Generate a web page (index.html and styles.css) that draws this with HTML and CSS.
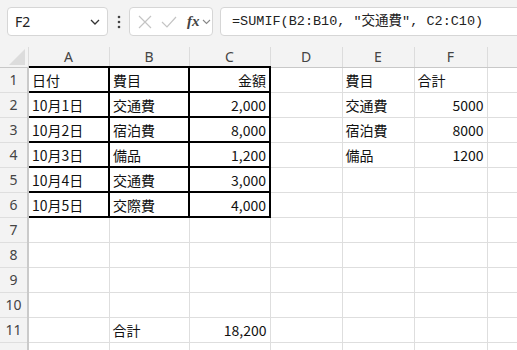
FILE: index.html
```html
<!DOCTYPE html>
<html>
	<head>
		<link rel="stylesheet" href="styles.css">
	</head>
	<body>
		<div class="toolbar">
			<div class="namebox">
				<span class="ref">F2</span>
				<svg class="chev" width="10" height="6" viewBox="0 0 10 6"><path d="M1 1 L5 5 L9 1" fill="none" stroke="#333" stroke-width="1.3"/></svg>
			</div>
			<div class="dots">
				<svg width="4" height="14" viewBox="0 0 4 14"><circle cx="2" cy="2" r="1.3" fill="#444"/><circle cx="2" cy="7" r="1.3" fill="#444"/><circle cx="2" cy="12" r="1.3" fill="#444"/></svg>
			</div>
			<div class="fnbox">
				<svg width="14" height="14" viewBox="0 0 14 14"><path d="M1 1 L13 13 M13 1 L1 13" stroke="#c4c4c4" stroke-width="1.2"/></svg>
				<svg width="16" height="12" viewBox="0 0 16 12"><path d="M1 6 L6 11 L15 1" fill="none" stroke="#c4c4c4" stroke-width="1.2"/></svg>
				<span class="fx">fx</span>
				<svg class="chev2" width="9" height="6" viewBox="0 0 9 6"><path d="M1 1 L4.5 4.5 L8 1" fill="none" stroke="#888" stroke-width="1.1"/></svg>
			</div>
			<div class="formula">=SUMIF(B2:B10, "交通費", C2:C10)</div>
		</div>
		<table class="sheet">
			<colgroup>
				<col class="w-h"><col class="w-a"><col class="w-b"><col class="w-c"><col class="w-d"><col class="w-e"><col class="w-f"><col class="w-g">
			</colgroup>
			<tr class="colhead">
				<th class="corner"><div class="tri"></div></th>
				<th>A</th><th>B</th><th>C</th><th>D</th><th>E</th><th>F</th><th></th>
			</tr>
			<tr>
				<th class="rh">1</th>
				<td class="b">日付</td><td class="b">費目</td><td class="b num">金額</td>
				<td></td><td>費目</td><td>合計</td><td></td>
			</tr>
			<tr>
				<th class="rh">2</th>
				<td class="b">10月1日</td><td class="b">交通費</td><td class="b num">2,000</td>
				<td></td><td>交通費</td><td class="num">5000</td><td></td>
			</tr>
			<tr>
				<th class="rh">3</th>
				<td class="b">10月2日</td><td class="b">宿泊費</td><td class="b num">8,000</td>
				<td></td><td>宿泊費</td><td class="num">8000</td><td></td>
			</tr>
			<tr>
				<th class="rh">4</th>
				<td class="b">10月3日</td><td class="b">備品</td><td class="b num">1,200</td>
				<td></td><td>備品</td><td class="num">1200</td><td></td>
			</tr>
			<tr>
				<th class="rh">5</th>
				<td class="b">10月4日</td><td class="b">交通費</td><td class="b num">3,000</td>
				<td></td><td></td><td></td><td></td>
			</tr>
			<tr>
				<th class="rh">6</th>
				<td class="b">10月5日</td><td class="b">交際費</td><td class="b num">4,000</td>
				<td></td><td></td><td></td><td></td>
			</tr>
			<tr><th class="rh">7</th><td></td><td></td><td></td><td></td><td></td><td></td><td></td></tr>
			<tr><th class="rh">8</th><td></td><td></td><td></td><td></td><td></td><td></td><td></td></tr>
			<tr><th class="rh">9</th><td></td><td></td><td></td><td></td><td></td><td></td><td></td></tr>
			<tr><th class="rh">10</th><td></td><td></td><td></td><td></td><td></td><td></td><td></td></tr>
			<tr>
				<th class="rh">11</th>
				<td></td><td>合計</td><td class="num">18,200</td>
				<td></td><td></td><td></td><td></td>
			</tr>
			<tr><th class="rh"></th><td></td><td></td><td></td><td></td><td></td><td></td><td></td></tr>
		</table>
	</body>
</html>
```
FILE: styles.css
```css
body{
	margin: 0;
	width: 517px;
	height: 350px;
	overflow: hidden;
	background-color: #fff;
	font-family: "Noto Sans", "Noto Sans CJK JP", sans-serif;
}
.toolbar{
	display: flex;
	align-items: center;
	height: 47px;
	box-sizing: border-box;
	padding: 7px 0 11px 7px;
	background-color: #f3f3f3;
}
.namebox{
	display: flex;
	align-items: center;
	justify-content: space-between;
	width: 101px;
	height: 29px;
	box-sizing: border-box;
	padding: 0 7px 0 7px;
	background-color: #fff;
	border: 1px solid #d6d6d6;
	border-radius: 4px;
	font-size: 14px;
	color: #222;
}
.dots{
	width: 21px;
	display: flex;
	justify-content: center;
}
.fnbox{
	display: flex;
	align-items: center;
	gap: 9px;
	width: 84px;
	height: 29px;
	box-sizing: border-box;
	padding-left: 8px;
	background-color: #fff;
	border: 1px solid #d6d6d6;
	border-radius: 4px;
}
.fx{
	font-family: "Liberation Serif", serif;
	font-style: italic;
	font-weight: bold;
	font-size: 15px;
	color: #444;
	margin-left: 1px;
}
.chev2{
	margin-left: -7px;
}
.formula{
	flex: 1;
	margin-left: 7px;
	margin-right: -10px;
	height: 29px;
	box-sizing: border-box;
	padding-left: 11px;
	line-height: 27px;
	background-color: #fff;
	border: 1px solid #d6d6d6;
	border-radius: 4px;
	font-family: "Liberation Mono", "Noto Sans CJK JP", monospace;
	font-size: 13.5px;
	color: #222;
	white-space: nowrap;
}
.sheet{
	table-layout: fixed;
	border-collapse: collapse;
	width: 547px;
}
.sheet tr{
	height: 25px;
}
.sheet tr.colhead{
	height: 20px;
}
.w-h{ width: 28px; }
.w-a{ width: 81px; }
.w-b{ width: 80px; }
.w-c{ width: 81px; }
.w-d{ width: 72px; }
.w-e{ width: 72px; }
.w-f{ width: 73px; }
.w-g{ width: 60px; }
.colhead th{
	padding: 0;
	background-color: #f3f3f3;
	border-right: 1px solid #dcdcdc;
	border-bottom: 1px solid #c8c8c8;
	font-weight: normal;
	font-size: 14px;
	color: #444;
	line-height: 18px;
}
.corner{
	position: relative;
}
.tri{
	position: absolute;
	right: 3px;
	bottom: 2px;
	width: 0;
	height: 0;
	border-left: 16px solid transparent;
	border-bottom: 16px solid #dcdcdc;
}
.rh{
	padding: 0;
	background-color: #f3f3f3;
	border-right: 2px solid #cacaca;
	border-bottom: 1px solid #dedede;
	font-weight: normal;
	font-size: 14px;
	line-height: 18px;
	color: #444;
	text-align: center;
}
td{
	padding: 0 3px;
	border: 1px solid #dedede;
	font-family: "Noto Sans CJK JP", sans-serif;
	font-size: 14px;
	line-height: 18px;
	color: #111;
	white-space: nowrap;
	overflow: hidden;
}
td.b{
	border: 2px solid #000;
}
.num{
	text-align: right;
}
```
